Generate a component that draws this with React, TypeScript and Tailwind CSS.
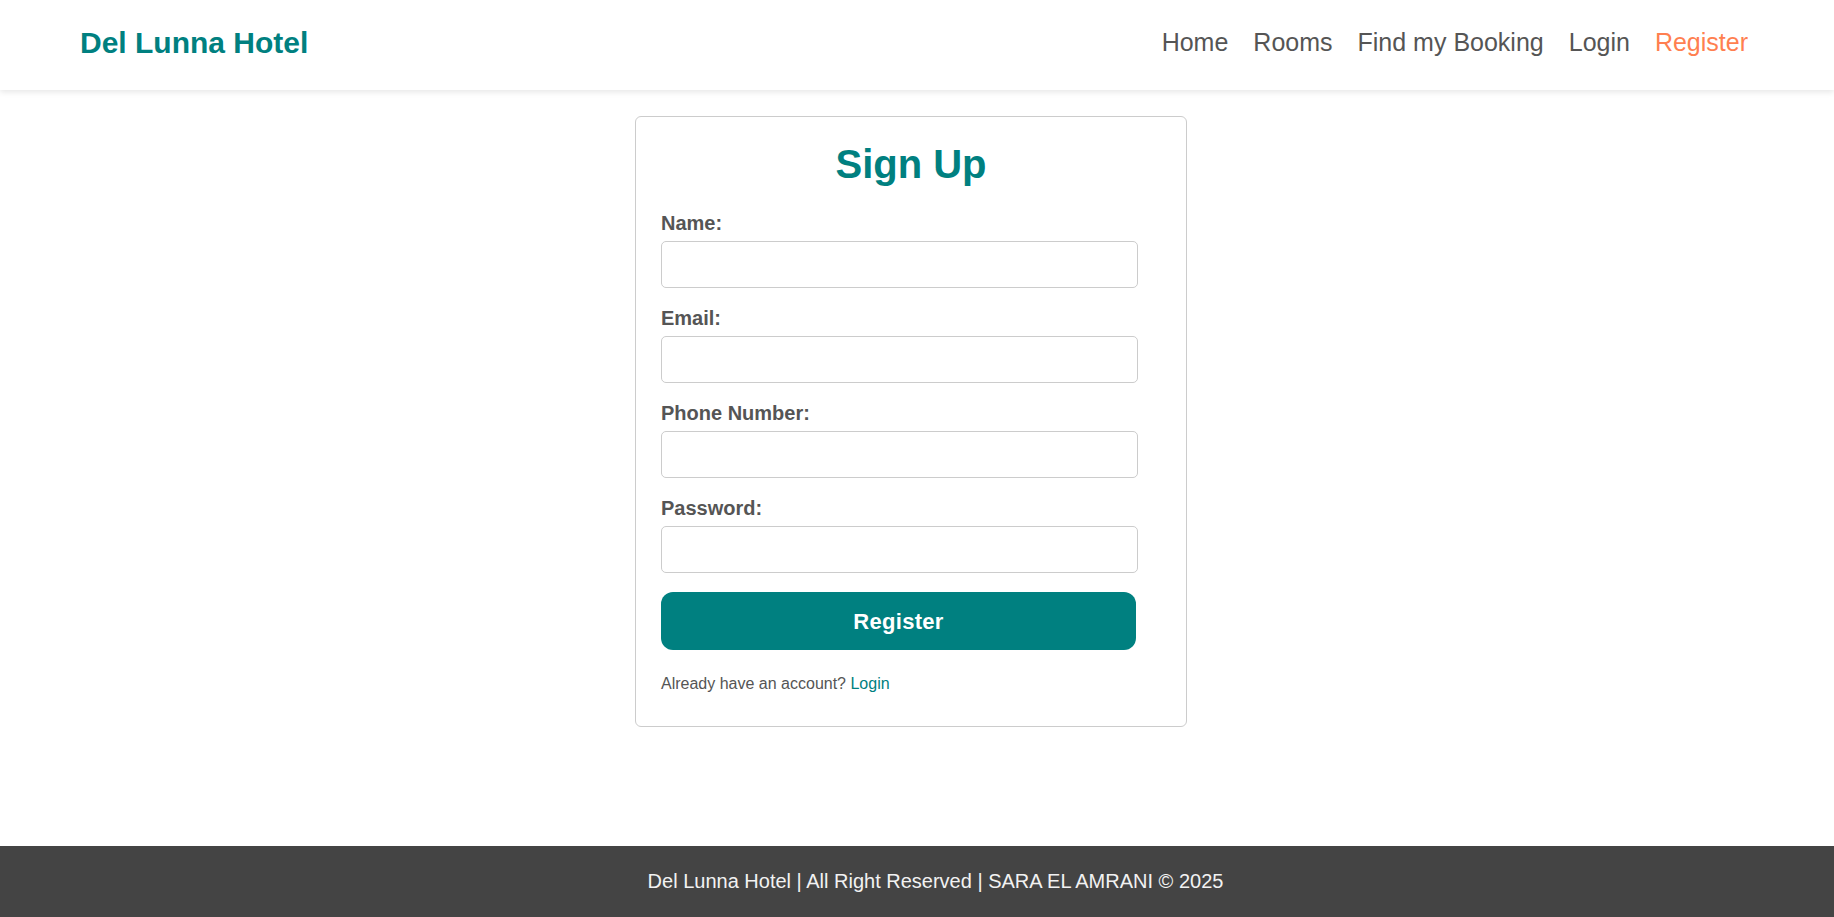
import React from 'react';

const fields = [
  { id: 'name', label: 'Name:', type: 'text' },
  { id: 'email', label: 'Email:', type: 'email' },
  { id: 'phone', label: 'Phone Number:', type: 'tel' },
  { id: 'password', label: 'Password:', type: 'password' },
];

const navLinks = ['Home', 'Rooms', 'Find my Booking', 'Login'];

const App: React.FC = () => {
  return (
    <div className="min-h-screen flex flex-col bg-white font-['Liberation_Sans',Arial,sans-serif]">
      <header className="h-[90px] shrink-0 flex items-center justify-between pl-20 pr-[86px] pb-[6px] bg-white shadow-[0_2px_6px_rgba(0,0,0,0.1)] relative z-10">
        <h1 className="text-[30px] font-bold text-[#008080] leading-[35px]">Del Lunna Hotel</h1>
        <nav className="flex items-center gap-[25px] text-[25px] leading-[29px]">
          {navLinks.map((link) => (
            <a key={link} href="#" className="text-[#555555]">
              {link}
            </a>
          ))}
          <a href="#" className="text-[#ff7f50]">
            Register
          </a>
        </nav>
      </header>

      <main className="flex-1 flex justify-center items-start pt-[26px] pr-3">
        <div className="w-[552px] border border-[#cccccc] rounded-[6px] bg-white px-[25px] pt-[24px] pb-[33px]">
          <h2 className="text-[40px] font-bold text-[#008080] text-center leading-[46px] mb-[25px]">Sign Up</h2>
          <form onSubmit={(e) => e.preventDefault()}>
            {fields.map((f) => (
              <div key={f.id} className="mb-[19px]">
                <label htmlFor={f.id} className="block text-[20px] leading-[23px] font-bold text-[#555555] mb-[6px]">
                  {f.label}
                </label>
                <input
                  id={f.id}
                  type={f.type}
                  className="block w-[477px] h-[47px] border border-[#cccccc] rounded-[5px] px-3 text-[18px] outline-none"
                />
              </div>
            ))}
            <button
              type="submit"
              className="w-[475px] h-[58px] bg-[#008080] text-white text-[22px] font-bold rounded-[12px] tracking-[0.3px]"
            >
              Register
            </button>
          </form>
          <p className="mt-[25px] text-[16px] leading-[18px] text-[#555555]">
            Already have an account?{' '}
            <a href="#" className="text-[#008080]">
              Login
            </a>
          </p>
        </div>
      </main>

      <footer className="h-[71px] shrink-0 flex items-center justify-center bg-[#444444] text-[#f2f2f2] text-[20px] leading-[23px] pl-[37px]">
        Del Lunna Hotel | All Right Reserved | SARA EL AMRANI © 2025
      </footer>
    </div>
  );
};

export default App;
